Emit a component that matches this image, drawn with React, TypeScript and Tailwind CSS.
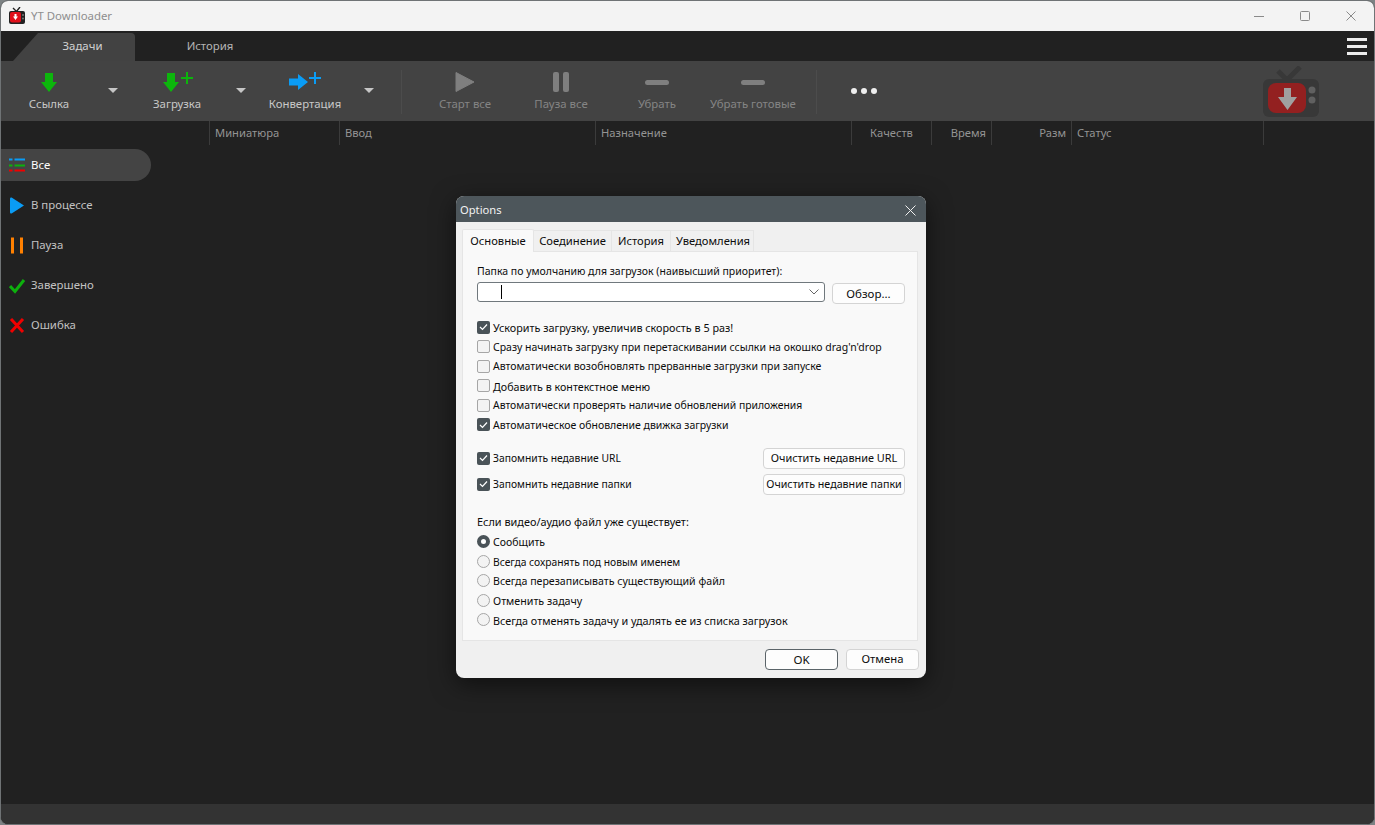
import React from "react";

const FONT = "[font-family:'Noto_Sans','Open_Sans',sans-serif]";

function ToolItem({ label, children, disabled, wide }: { label: string; children: React.ReactNode; disabled?: boolean; wide?: boolean }) {
  return (
    <div className={`${wide ? "w-24" : "w-16"} flex flex-col items-center shrink-0`}>
      <div className="h-[26px] flex items-start justify-center">{children}</div>
      <span className={`whitespace-nowrap text-[11.4px] leading-[14px] ${disabled ? "text-[#858585]" : "text-[#c8c8c8]"}`}>{label}</span>
    </div>
  );
}

function Caret() {
  return (
    <div className="w-16 shrink-0 flex justify-center pt-[17px]">
      <svg width="10" height="5" viewBox="0 0 10 5"><path d="M0 0h10L5 5z" fill="#c6c6c6" /></svg>
    </div>
  );
}

function GreenArrow({ x }: { x: number }) {
  return <path d={`M${x - 4} 11V2h8v9h4l-8 10-8-10z`} fill="#0cb50c" />;
}

function Separator() {
  return <div className="w-px h-[44px] -mt-px bg-[#4c4c4c] shrink-0" />;
}

function Col({ w, label, align = "left" }: { w: number; label?: string; align?: "left" | "right" | "center" }) {
  return (
    <div
      style={{ width: w }}
      className={`shrink-0 h-full border-l border-[#3b3b3b] text-[11.2px] leading-[24px] text-[#949494] whitespace-nowrap overflow-hidden ${
        align === "left" ? "pl-[5px] text-left" : align === "right" ? "pr-[5px] text-right" : "text-center"
      }`}
    >
      {label}
    </div>
  );
}

function Side({ label, active, children }: { label: string; active?: boolean; children: React.ReactNode }) {
  return (
    <div className={`w-[150px] h-[32px] flex items-center rounded-r-full pl-[8px] gap-[5px] ${active ? "bg-[#444444]" : ""}`}>
      <svg width="17" height="17" viewBox="0 0 17 17" className="shrink-0">{children}</svg>
      <span className={`text-[11.4px] leading-none ${active ? "text-white" : "text-[#c2c2c2]"}`}>{label}</span>
    </div>
  );
}

function Check({ on }: { on?: boolean }) {
  return on ? (
    <span className="w-[13px] h-[13px] rounded-[2px] bg-[#4a5358] flex items-center justify-center shrink-0">
      <svg width="9" height="8" viewBox="0 0 9 8"><path d="M1 4l2.500 2.500L8 1.500" stroke="#fff" strokeWidth="1.200" fill="none" /></svg>
    </span>
  ) : (
    <span className="w-[13px] h-[13px] rounded-[2px] bg-[#f3f3f3] border border-[#a6a6a6] shrink-0" />
  );
}

function CheckRow({ on, label, size = "text-[10.5px]" }: { on?: boolean; label: string; size?: string }) {
  return (
    <div className="h-[19.5px] flex items-center gap-[3px] whitespace-nowrap">
      <Check on={on} />
      <span className={`${size} pt-[2px]`}>{label}</span>
    </div>
  );
}

function Radio({ on, label, size = "text-[10.5px]" }: { on?: boolean; label: string; size?: string }) {
  return (
    <div className="h-[19.5px] flex items-center gap-[3px] whitespace-nowrap">
      {on ? (
        <span className="w-[13px] h-[13px] rounded-full border-[4px] border-[#4a5358] bg-white shrink-0" />
      ) : (
        <span className="w-[13px] h-[13px] rounded-full border border-[#a6a6a6] bg-[#f3f3f3] shrink-0" />
      )}
      <span className={`${size} pt-[2px]`}>{label}</span>
    </div>
  );
}

function Btn({ label, w, primary, size = "text-[11.3px]" }: { label: string; w: number; primary?: boolean; size?: string }) {
  return (
    <div
      style={{ width: w }}
      className={`h-[21px] shrink-0 rounded-[4px] bg-[#fdfdfd] flex items-center justify-center whitespace-nowrap border ${size} ${
        primary ? "border-[#5b6469]" : "border-[#d4d4d4]"
      }`}
    >
      {label}
    </div>
  );
}

function DTab({ label, w, active, extra = "" }: { label: string; w: number; active?: boolean; extra?: string }) {
  return (
    <div
      style={{ width: w }}
      className={`flex items-center justify-center text-[11.2px] border-t border-r border-[#e5e5e5] ${extra} ${
        active ? "h-[23px] bg-[#f9f9f9] border-l -mb-px z-10 rounded-t-[2px]" : "h-[21px] bg-[#f0f0f0]"
      }`}
    >
      {label}
    </div>
  );
}

function Dialog() {
  return (
    <div className="absolute left-[456px] top-[196px] w-[470px] h-[482px] rounded-[8px] overflow-hidden bg-[#f0f0f0] flex flex-col text-[10.5px] text-[#0c0c0c] shadow-[0_6px_24px_rgba(0,0,0,0.55)]">
      <div className="h-[26px] shrink-0 bg-[#4d565b] flex items-center justify-between pl-[4px] pr-[10px] pt-[2px] text-[11.2px] text-[#f2f2f2]">
        <span>Options</span>
        <svg width="11" height="11" viewBox="0 0 11 11"><path d="M.5.500l10 10M10.500.500l-10 10" stroke="#f0f0f0" strokeWidth="1" /></svg>
      </div>
      <div className="flex items-end pl-[6px] mt-[7px] h-[22px] shrink-0">
        <DTab label="Основные" w={72} active />
        <DTab label="Соединение" w={78} />
        <DTab label="История" w={59} />
        <DTab label="Уведомления" w={83} extra="pl-[2px]" />
      </div>
      <div className="ml-[6px] w-[456px] h-[390px] shrink-0 bg-[#f9f9f9] border border-[#e5e5e5] pl-[14px] pr-[12px] pt-[10px]">
        <div className="h-[20px] flex items-center whitespace-nowrap">Папка по умолчанию для загрузок (наивысший приоритет):</div>
        <div className="flex gap-[7px] h-[21px]">
          <div className="w-[348px] h-[20px] bg-white border border-[#70787d] rounded-[3px] flex items-center justify-between pl-[23px] pr-[5px]">
            <span className="w-px h-[14px] bg-black" />
            <svg width="10" height="6" viewBox="0 0 10 6"><path d="M.5.500L5 5l4.500-4.500" stroke="#666" fill="none" /></svg>
          </div>
          <div className="mt-px"><Btn label="Обзор..." w={73} size="text-[11.5px]" /></div>
        </div>
        <div className="mt-[14.500px]">
          <CheckRow on label="Ускорить загрузку, увеличив скорость в 5 раз!" size="text-[10.8px]" />
          <CheckRow label="Сразу начинать загрузку при перетаскивании ссылки на окошко drag'n'drop" />
          <CheckRow label="Автоматически возобновлять прерванные загрузки при запуске" />
          <CheckRow label="Добавить в контекстное меню" size="text-[10.7px]" />
          <CheckRow label="Автоматически проверять наличие обновлений приложения" size="text-[10.4px]" />
          <CheckRow on label="Автоматическое обновление движка загрузки" />
        </div>
        <div className="mt-[12.500px] h-[22px] flex items-center justify-between">
          <CheckRow on label="Запомнить недавние URL" size="text-[10.3px]" />
          <Btn label="Очистить недавние URL" w={142} size="text-[10.9px]" />
        </div>
        <div className="mt-[4px] h-[22px] flex items-center justify-between">
          <CheckRow on label="Запомнить недавние папки" size="text-[10.3px]" />
          <Btn label="Очистить недавние папки" w={142} size="text-[10.7px]" />
        </div>
        <div className="mt-[17px] h-[20px] flex items-center whitespace-nowrap text-[10.9px]">Если видео/аудио файл уже существует:</div>
        <Radio on label="Сообщить" />
        <Radio label="Всегда сохранять под новым именем" size="text-[10.3px]" />
        <Radio label="Всегда перезаписывать существующий файл" size="text-[10.6px]" />
        <Radio label="Отменить задачу" size="text-[10.7px]" />
        <Radio label="Всегда отменять задачу и удалять ее из списка загрузок" size="text-[10.8px]" />
      </div>
      <div className="flex justify-end gap-[8px] pr-[7px] mt-[8px]">
        <Btn label="OK" w={73} primary size="text-[11.5px]" />
        <Btn label="Отмена" w={73} />
      </div>
    </div>
  );
}

export default function App() {
  return (
    <div className={`w-[1375px] h-[825px] bg-[#7d8284] relative overflow-hidden ${FONT}`}>
      <div className="h-full rounded-[8px] overflow-hidden border border-[#6f7375] bg-[#212121] flex flex-col">
        {/* title bar */}
        <div className="h-[30px] shrink-0 bg-[#f3f3f3] flex items-center pl-[8px]">
          <svg width="17" height="17" viewBox="0 0 17 17" className="shrink-0 -mt-[2px]">
            <path d="M4 1l3.500 3.500L11 0" stroke="#222" strokeWidth="1.400" fill="none" />
            <rect x="0" y="4" width="16" height="13" rx="2" fill="#222" />
            <rect x="1" y="5" width="11" height="10.500" rx="2" fill="#e0101a" />
            <path d="M5.500 7h2v2.500h1.500L6.500 13 4 9.500h1.500z" fill="#fff" />
            <circle cx="14" cy="8" r="1" fill="#777" />
            <circle cx="14" cy="11.500" r="1" fill="#777" />
          </svg>
          <span className="ml-[5px] text-[11.4px] text-[#8e8e8e]">YT Downloader</span>
          <div className="ml-auto flex items-center">
            <div className="w-[46px] flex justify-center"><svg width="10" height="10" viewBox="0 0 10 10"><path d="M0 5.500h10" stroke="#8a8a8a" /></svg></div>
            <div className="w-[46px] flex justify-center"><svg width="10" height="10" viewBox="0 0 10 10"><rect x=".5" y=".5" width="9" height="9" rx="1" fill="none" stroke="#8a8a8a" /></svg></div>
            <div className="w-[46px] flex justify-center"><svg width="10" height="10" viewBox="0 0 10 10"><path d="M.5.500l9 9M9.500.500l-9 9" stroke="#8a8a8a" /></svg></div>
          </div>
        </div>
        {/* tabs */}
        <div className="h-[30px] shrink-0 flex items-end pl-[12px] relative">
          <div className="w-[122px] h-[28px] bg-[#424242] rounded-tr-[4px] flex items-center justify-center text-[11.4px] text-[#d2d2d2] [clip-path:polygon(0_100%,25px_0,100%_0,100%_100%)] pl-[17px] pb-[2px]">
            Задачи
          </div>
          <div className="w-[150px] h-[28px] flex items-center justify-center text-[11.4px] text-[#b4b4b4] pb-[2px]">История</div>
          <div className="ml-auto mr-[7px] self-center flex flex-col gap-[4px]">
            <span className="w-[20px] h-[3px] bg-[#ececec]" />
            <span className="w-[20px] h-[3px] bg-[#ececec]" />
            <span className="w-[20px] h-[3px] bg-[#ececec]" />
          </div>
        </div>
        {/* toolbar */}
        <div className="h-[60px] shrink-0 bg-[#434343] flex pl-[16px] pt-[10px]">
          <ToolItem label="Ссылка">
            <svg width="24" height="24" viewBox="20 0 24 24"><GreenArrow x={32} /></svg>
          </ToolItem>
          <Caret />
          <ToolItem label="Загрузка">
            <svg width="40" height="24" viewBox="0 0 40 24"><GreenArrow x={14} /><path d="M30 1v12M24 7h12" stroke="#0cb50c" strokeWidth="2" /></svg>
          </ToolItem>
          <Caret />
          <ToolItem label="Конвертация">
            <svg width="36" height="24" viewBox="0 0 36 24"><path d="M2 7.500h9V3l10 8-10 8v-4.500H2z" fill="#0a9cf5" /><path d="M28 1v12M22 7h12" stroke="#0a9cf5" strokeWidth="2" /></svg>
          </ToolItem>
          <Caret />
          <Separator />
          <div className="w-[15px] shrink-0" />
          <ToolItem label="Старт все" disabled wide>
            <svg width="20" height="22" viewBox="0 0 20 22"><path d="M1 1.500L19 11 1 20.500z" fill="#7f7f7f" stroke="#7f7f7f" strokeLinejoin="round" /></svg>
          </ToolItem>
          <ToolItem label="Пауза все" disabled wide>
            <svg width="18" height="22" viewBox="0 0 18 22"><rect x="1" y="1" width="6" height="20" rx="2" fill="#7f7f7f" /><rect x="11" y="1" width="6" height="20" rx="2" fill="#7f7f7f" /></svg>
          </ToolItem>
          <ToolItem label="Убрать" disabled wide>
            <svg width="24" height="22" viewBox="0 0 24 22"><rect x="0" y="9" width="24" height="5" rx="2.500" fill="#7f7f7f" /></svg>
          </ToolItem>
          <ToolItem label="Убрать готовые" disabled wide>
            <svg width="24" height="22" viewBox="0 0 24 22"><rect x="0" y="9" width="24" height="5" rx="2.500" fill="#7f7f7f" /></svg>
          </ToolItem>
          <div className="w-[15px] shrink-0" />
          <Separator />
          <div className="w-[15px] shrink-0" />
          <div className="w-16 shrink-0 flex justify-center pt-[17px]">
            <svg width="26" height="6" viewBox="0 0 26 6"><circle cx="3" cy="3" r="3" fill="#eee" /><circle cx="13" cy="3" r="3" fill="#eee" /><circle cx="23" cy="3" r="3" fill="#eee" /></svg>
          </div>
          <svg width="56" height="52" viewBox="0 0 56 52" className="ml-auto mr-[55px] -mt-[5px] shrink-0">
            <path d="M15 5l9 9L37 1" stroke="#383838" strokeWidth="5" fill="none" />
            <rect x="0" y="13" width="56" height="38" rx="6" fill="#383838" />
            <rect x="5" y="17" width="38" height="30" rx="8" fill="#932020" />
            <path d="M21 22h7v9h6L24.500 44 15 31h6z" fill="#a0a0a0" />
            <circle cx="49" cy="24" r="3.500" fill="#606060" />
            <circle cx="49" cy="34" r="3.500" fill="#606060" />
          </svg>
        </div>
        {/* table header */}
        <div className="h-[24px] shrink-0 flex pl-[208px]">
          <Col w={130} label="Миниатюра" />
          <Col w={256} label="Ввод" />
          <Col w={256} label="Назначение" />
          <Col w={80} label="Качеств" align="center" />
          <Col w={60} label="Время" align="right" />
          <Col w={80} label="Разм" align="right" />
          <Col w={192} label="Статус" />
          <Col w={1} />
        </div>
        {/* sidebar */}
        <div className="flex-1 pt-[4px] flex flex-col gap-[8px]">
          <Side label="Все" active>
            <path d="M0 2.500h3.500M5.500 2.500H16" stroke="#0a9cf5" strokeWidth="2" />
            <path d="M0 8.500h3.500M5.500 8.500H16" stroke="#0db00d" strokeWidth="2" />
            <path d="M0 13.500h3.500M5.500 13.500H16" stroke="#f00000" strokeWidth="2" />
          </Side>
          <Side label="В процессе">
            <path d="M1 2c0-1.500 1-2 2-1.200L15 8.500 3 16.200c-1 .800-2 .300-2-1.200z" fill="#0a9cf5" />
          </Side>
          <Side label="Пауза">
            <rect x="2" y=".5" width="3" height="16" fill="#ff8000" />
            <rect x="11" y=".5" width="3" height="16" fill="#ff8000" />
          </Side>
          <Side label="Завершено">
            <path d="M1 9l5 5.500L15 3" stroke="#0db00d" strokeWidth="3" fill="none" />
          </Side>
          <Side label="Ошибка">
            <path d="M2 2l12 13M14 2L2 15" stroke="#f00000" strokeWidth="3" />
          </Side>
        </div>
        {/* status bar */}
        <div className="h-[20px] shrink-0 bg-[#333333]" />
      </div>
      <Dialog />
    </div>
  );
}
